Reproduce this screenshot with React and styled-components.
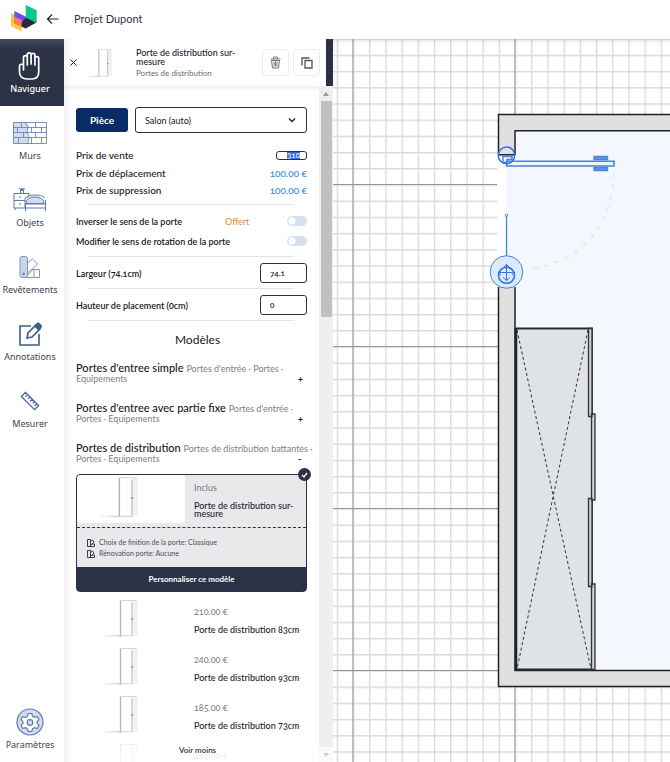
import { useEffect, useRef, useState } from "react";
import styled, { createGlobalStyle } from "styled-components";

const GlobalStyle = createGlobalStyle`
  * {
    box-sizing: border-box;
  }
  body {
    margin: 0;
    background-color: #fff;
    color: #16181d;
    font-family: Lato, "Liberation Sans", sans-serif;
    font-variant-numeric: oldstyle-nums;
    font-size: 11px;
  }
  button, input, select {
    font: inherit;
    font-variant-numeric: inherit;
    color: inherit;
    margin: 0;
  }
  button {
    cursor: pointer;
  }
`;
const Page = styled.div`
  display: flex;
  flex-direction: column;
  height: 100vh;
  overflow: hidden;
`;
const TopBar = styled.header`
  display: flex;
  align-items: center;
  flex: none;
  height: 39px;
  padding: 0 10px 2px;
`;
const BackButton = styled.button`
  display: flex;
  padding: 0;
  margin: 0 14px 0 8px;
  border: 0;
  background: none;
`;
const ProjectName = styled.h1`
  margin: 0;
  font-size: 11px;
  font-weight: 400;
  color: #2c3345;
`;
const Workspace = styled.div`
  display: flex;
  flex: 1;
  min-height: 0;
`;
const SideNav = styled.nav`
  display: flex;
  flex-direction: column;
  flex: none;
  width: 64px;
  z-index: 1;
`;
const NavButton = styled.button`
  display: flex;
  flex-direction: column;
  align-items: center;
  height: 67px;
  padding: 10px 4px 0 0;
  border: 0;
  font-family: "Noto Sans", sans-serif;
  font-size: 9px;
  line-height: 14px;
  color: ${(props) => (props.$active ? "#fff" : "#3d4353")};
  font-weight: ${(props) => (props.$active ? 500 : 400)};
  background: ${(props) =>
    props.$active ? "linear-gradient(#454e64, #2b3245 10px)" : "none"};
  margin-top: ${(props) => (props.$last ? "auto" : "0")};
`;
const NavIcon = styled.span`
  display: flex;
  align-items: center;
  justify-content: center;
  height: 33px;
`;
const Panel = styled.aside`
  display: flex;
  flex-direction: column;
  flex: none;
  width: 269px;
  box-shadow: inset 8px 0 8px -6px #ececf0;
`;
const PanelHeader = styled.div`
  display: flex;
  align-items: center;
  flex: none;
  height: 47px;
  padding: 0 6px;
  border-right: 7px solid #2b3245;
  box-shadow: 0 2px 4px rgba(0, 0, 0, 0.08);
`;
const CloseButton = styled.button`
  display: flex;
  padding: 0;
  border: 0;
  background: none;
`;
const HeaderThumb = styled.div`
  flex: none;
  width: 59px;
  padding: 3px 0 0 7px;
`;
const HeaderText = styled.div`
  flex: 1;
`;
const ItemTitle = styled.h2`
  margin: 0;
  font-size: 9px;
  line-height: 9px;
  font-weight: 500;
  color: #20242f;
`;
const ItemSub = styled.p`
  margin: 2px 0 0;
  font-size: 8px;
  line-height: 10px;
  color: #6c6c6c;
`;
const SquareButton = styled.button`
  display: flex;
  align-items: center;
  justify-content: center;
  width: 27px;
  height: 27px;
  margin-left: 4px;
  padding: 0;
  border: 1px solid #ececec;
  border-radius: 4px;
  background: #fff;
`;
const PanelBody = styled.div`
  display: flex;
  flex: 1;
  min-height: 0;
  position: relative;
`;
const Content = styled.div`
  flex: 1;
  min-width: 0;
  padding: 21px 12px 0;
  overflow: hidden;
`;
const Track = styled.div`
  display: flex;
  flex-direction: column;
  align-items: center;
  width: 14px;
  background: #efefef;
`;
const TrackEnd = styled.div`
  display: flex;
  align-items: center;
  justify-content: center;
  height: 15px;
  width: 14px;
  background: ${(props) => (props.$off ? "#fafafa" : "#efefef")};
  margin-top: ${(props) => (props.$off ? "auto" : "0")};
`;
const Thumb = styled.div`
  width: 11px;
  height: 32%;
  background: #c1c1c1;
`;
const RoomRow = styled.div`
  display: flex;
  align-items: center;
  gap: 7px;
  margin-bottom: 13px;
`;
const RoomButton = styled.button`
  width: 52px;
  height: 24px;
  padding: 0;
  border: 0;
  border-radius: 3px;
  background: #092c66;
  color: #fff;
  font-size: 10px;
  font-weight: 700;
`;
const SelectWrap = styled.div`
  display: flex;
  align-items: center;
  flex: 1;
  height: 26px;
  padding-right: 10px;
  border: 1px solid #2b3245;
  border-radius: 3px;
`;
const RoomSelect = styled.select`
  flex: 1;
  height: 24px;
  padding: 0 9px;
  border: 0;
  background: none;
  appearance: none;
  font-size: 9px;
`;
const Row = styled.div`
  display: flex;
  align-items: center;
  height: ${(props) => props.$height}px;
  font-size: ${(props) => (props.$small ? "9px" : "10px")};
  font-weight: ${(props) => (props.$small ? 600 : 500)};
`;
const RowLabel = styled.label`
  flex: 1;
`;
const Price = styled.span`
  color: #2a7fd8;
  font-weight: 400;
`;
const Offer = styled.span`
  width: 62px;
  color: #d8894a;
  font-size: 9px;
  font-weight: 400;
`;
const PriceInput = styled.input`
  width: 31px;
  height: 9px;
  padding: 0 6px;
  border: 1px solid #2b3245;
  border-radius: 3px;
  outline: 0;
  text-align: right;
  font-size: 8px;
  line-height: 7px;
  &::selection {
    background: #2f6bd8;
    color: #fff;
  }
`;
const SizeInput = styled.input`
  width: 47px;
  height: 20px;
  padding: 0 9px;
  border: 1px solid #2b3245;
  border-radius: 3px;
  font-size: 8px;
`;
const Switch = styled.input`
  appearance: none;
  width: 20px;
  height: 10px;
  margin: 0;
  border-radius: 5px;
  background: radial-gradient(circle at 5px 5px, #fff 3px, #d7dfef 4px);
  &:checked {
    background: radial-gradient(circle at 15px 5px, #fff 3px, #092c66 4px);
  }
`;
const Divider = styled.hr`
  height: 1px;
  margin: 5px 13px 6px;
  border: 0;
  background: #e4e4e6;
`;
const SectionTitle = styled.h3`
  margin: 11px -12px 13px 0;
  text-align: center;
  font-size: 12px;
  line-height: 16px;
  font-weight: 400;
`;
const Group = styled.button`
  display: flex;
  align-items: flex-end;
  width: 100%;
  height: 22px;
  margin-bottom: 18px;
  padding: 0;
  border: 0;
  background: none;
  text-align: left;
  line-height: 9px;
`;
const GroupText = styled.span`
  flex: 1;
  min-width: 0;
  white-space: nowrap;
`;
const GroupName = styled.span`
  font-size: 11px;
  font-weight: 500;
`;
const GroupPath = styled.span`
  font-size: 9px;
  color: #7d8087;
`;
const Sign = styled.span`
  width: 9px;
  margin-left: -9px;
  font-size: 9px;
  font-weight: 700;
`;
const SelectedCard = styled.article`
  position: relative;
  margin-top: -7px;
  border: 1px solid #2b3245;
  border-radius: 4px;
  background: #e9e9eb;
`;
const CheckBadge = styled.span`
  position: absolute;
  top: -7px;
  right: -5px;
  display: flex;
  align-items: center;
  justify-content: center;
  width: 13px;
  height: 13px;
  border-radius: 50%;
  background: #2b3245;
`;
const CardTop = styled.div`
  display: flex;
  height: 53px;
  padding-bottom: 4px;
  border-bottom: 1px dashed #2b3245;
`;
const CardThumb = styled.div`
  display: flex;
  justify-content: center;
  width: 108px;
  padding-right: 20px;
  border-radius: 4px;
  background: #fff;
`;
const CardText = styled.div`
  flex: 1;
  padding: 7px 0 0 9px;
`;
const ModelPrice = styled.p`
  margin: 0;
  font-size: ${(props) => (props.$included ? "9px" : "10px")};
  line-height: 12px;
  color: #777a82;
`;
const ModelName = styled.p`
  margin: 8px 0 0;
  font-size: 9px;
  line-height: 8px;
  font-weight: 500;
  white-space: nowrap;
  color: #20242f;
`;
const Options = styled.ul`
  margin: 0;
  padding: 9px 10px 8px;
  list-style: none;
  font-size: 7px;
  line-height: 11px;
  color: #4b4f5b;
`;
const Option = styled.li`
  display: flex;
  align-items: center;
  gap: 4px;
`;
const CustomizeButton = styled.button`
  display: block;
  width: 100%;
  height: 24px;
  padding: 0;
  border: 0;
  background: #2b3245;
  color: #fff;
  font-size: 8px;
  font-weight: 700;
`;
const Model = styled.article`
  display: flex;
  height: 48px;
`;
const ModelThumb = styled.div`
  display: flex;
  justify-content: center;
  width: 109px;
  padding: 7px 18px 0 0;
`;
const ModelText = styled.div`
  padding: 14px 0 0 9px;
`;
const MoreBar = styled.div`
  position: absolute;
  left: 12px;
  right: 14px;
  bottom: 0;
  display: flex;
  justify-content: center;
  height: 24px;
  padding-top: 6px;
  background: linear-gradient(rgba(255, 255, 255, 0.4), rgba(255, 255, 255, 0.85) 12px);
`;
const MoreButton = styled.button`
  height: 12px;
  padding: 0;
  border: 0;
  background: none;
  font-size: 8px;
  font-weight: 500;
`;
const PlanArea = styled.main`
  flex: 1;
  min-width: 0;
`;
const Plan = styled.svg`
  display: block;
  width: 100%;
  height: 100%;
`;

function Logo() {
  return (
    <svg width="27" height="27" viewBox="0 0 27 27">
      <path d="M1 8l10.700 5.300v13.200L1 21z" fill="#ffc931" />
      <path d="M15.700 0l11 5.300v13l-11-5.300z" fill="#0bc68a" />
      <path d="M4.300 6l11.400 5.500v12L4.300 18z" fill="#6c4df6" />
      <path d="M4.300 11.500l7.400 3.600v6.600L4.300 18z" fill="#ff7a59" />
      <path d="M15.700 12.500l10.300 5.200-10.300 5.800-4-2v-3.500z" fill="#262b3d" />
    </svg>
  );
}

function Door({ width, height }) {
  return (
    <svg width={width} height={height} viewBox="0 0 42 40">
      <defs>
        <linearGradient id="shade">
          <stop offset="0" stopColor="#fff" />
          <stop offset="1" stopColor="#ccc" />
        </linearGradient>
      </defs>
      <path d="M0 36h21v1.500H0z" fill="url(#shade)" />
      <path d="M31.500 2h5v34l-5 1z" fill="#f1f1f2" />
      <path d="M19.500 37V2h11.500v35z" fill="#fff" />
      <path d="M19.500 37V1.500" stroke="#b4b4b8" strokeWidth="1.300" />
      <path d="M31 3v34" stroke="#c4c4c8" strokeWidth="1.300" />
      <path d="M19 1.500h17M19 36.800h12" stroke="#d4d4d6" fill="none" />
      <path d="M30 20h2.500" stroke="#999" strokeWidth="1.300" />
    </svg>
  );
}

function SwatchIcon() {
  return (
    <svg width="8" height="8" viewBox="0 0 8 8" fill="none" stroke="#262b3d" strokeWidth=".9">
      <path d="M.5.500h3v7h-3zM3.500 2.500l2-1.500 1.500 2-3.500 3.500M5 5h2.500v2.500h-5" />
    </svg>
  );
}

const icons = {
  hand: (
    <svg width="24" height="30" viewBox="0 0 24 30" fill="none" stroke="#fff" strokeWidth="1.700" strokeLinecap="round" strokeLinejoin="round">
      <path d="M5.500 17V6.500a1.900 1.900 0 0 1 3.800 0V14M9.300 13V3.800a1.900 1.900 0 0 1 3.800 0V13M13.100 13V4.300a1.900 1.900 0 0 1 3.800 0V14M16.900 14V7.500a1.900 1.900 0 0 1 3.800 0V21c0 4.500-2.500 7-7 7H9c-4.500 0-7.500-2.500-7.500-7v-5.500a2 2 0 0 1 4-.5v4" />
    </svg>
  ),
  walls: (
    <svg width="34" height="22" viewBox="0 0 34 22" fill="none" stroke="#5c7bab">
      <path d="M.5.500h14l1 5-2 5 2 5-1 6H.5z" fill="#d2dced" stroke="none" />
      <path d="M.5.500h33v21H.5zM.5 5.500h33M.5 10.500h33M.5 15.500h33M8.500.500v5M4.500 5.500v5M10.500 10.500v5M5.500 15.500v6M22.500.500v5M18.500 5.500v5M28.500 5.500v5M22.500 10.500v5M18.500 15.500v6M28.500 15.500v6M12 .5l3 4-1 6 2 4-1 7" strokeWidth=".8" />
    </svg>
  ),
  objects: (
    <svg width="34" height="23" viewBox="0 0 34 23" fill="none" stroke="#5c7bab">
      <path d="M1 5.500h15v2l-4 3V20H1zM1 12.500h11M7.500 5V1.500h3V5M2 20v2M6 9h2M6 16h2" />
      <path d="M13 15.500c0-4 3-6.500 9-6.500s9 2.500 9 6.500z" fill="#d2dced" />
      <path d="M14 10V9c1-1 4-2 8-2s8 1 9 2v1M12.500 16h20v4h-20zM12.500 20v3M32.500 12v11" />
      <path d="M6 .8h6M7 2.500h4" />
    </svg>
  ),
  covers: (
    <svg width="22" height="22" viewBox="0 0 22 22" fill="none" stroke="#7e96bd">
      <rect x="1" y=".5" width="7.500" height="21" rx="2" fill="#c9d5e8" />
      <path d="M8.500 7l5-4 5 5-10 9M13.500 13.500h7v8h-14M8.500 19l6-6M15 14v7" />
      <circle cx="4.700" cy="18" r="1" fill="#5c7bab" />
    </svg>
  ),
  notes: (
    <svg width="23" height="24" viewBox="0 0 23 24" fill="none" stroke="#3c5b92" strokeWidth="1.600">
      <path d="M12 4H1v19h19V12M8 16l1-5 8-8 4 4-8 8z" />
      <path d="M16 4l2.500-2.500c1-1 4.500 2.500 3.500 3.500L19.500 7.500z" fill="#3c5b92" />
    </svg>
  ),
  ruler: (
    <svg width="20" height="20" viewBox="0 0 22 22" fill="none" stroke="#47669c" strokeWidth="1.400">
      <path d="M1.500 6L6 1.500 20.500 16 16 20.500zM8.500 4L6 6.500M11 6.500L9 8.500M13.500 9L11 11.500M16 11.500l-2 2M18.500 14L16 16.500" />
    </svg>
  ),
  settings: (
    <svg width="28" height="28" viewBox="0 0 28 28" fill="#d2dced" stroke="#5c7bab" strokeWidth="1.200">
      <circle cx="14" cy="14" r="13" />
      <path fill="#fff" strokeLinejoin="round" d="M12.200 5.500h3.600l.7 2.700 2 1.100 2.700-.8 1.800 3.200-2 2v1.600l2 2-1.800 3.200-2.700-.8-2 1.100-.7 2.700h-3.600l-.7-2.700-2-1.100-2.700.8L5 17.300l2-2v-1.600l-2-2 1.800-3.200 2.700.8 2-1.100z" />
      <circle cx="14" cy="14.500" r="2.800" />
    </svg>
  ),
};

const navItems = [
  { label: "Naviguer", icon: "hand" },
  { label: "Murs", icon: "walls" },
  { label: "Objets", icon: "objects" },
  { label: "Revêtements", icon: "covers" },
  { label: "Annotations", icon: "notes" },
  { label: "Mesurer", icon: "ruler" },
  { label: "Paramètres", icon: "settings" },
];
const groups = [
  { name: "Portes d'entree simple", path: ["Portes d'entrée · Portes ·", "Equipements"] },
  { name: "Portes d'entree avec partie fixe", path: ["Portes d'entrée ·", "Portes · Equipements"] },
  { name: "Portes de distribution", path: ["Portes de distribution battantes ·", "Portes · Equipements"], open: true },
];
const models = [
  { price: "210.00 €", name: "Porte de distribution 83cm" },
  { price: "240.00 €", name: "Porte de distribution 93cm" },
  { price: "185.00 €", name: "Porte de distribution 73cm" },
  { price: "160.00 €" },
];

function FloorPlan() {
  return (
    <Plan>
      <defs>
        <pattern id="minor" x="3.700" y="-.5" width="16.200" height="16.200" patternUnits="userSpaceOnUse">
          <path d="M0 .7h16.200M.7 0v16.200" stroke="#d9d9d9" strokeWidth="1.300" />
        </pattern>
        <pattern id="major" x="19.400" y="145" width="162" height="162" patternUnits="userSpaceOnUse">
          <path d="M0 .5h162M.5 0v162" stroke="#949494" strokeWidth="1" />
        </pattern>
        <linearGradient id="topShade" x2="0" y2="1">
          <stop offset="0" stopColor="#000" stopOpacity=".08" />
          <stop offset="1" stopColor="#000" stopOpacity="0" />
        </linearGradient>
      </defs>
      <rect width="100%" height="100%" fill="url(#minor)" />
      <rect width="100%" height="100%" fill="url(#major)" />
      <rect width="100%" height="5" fill="url(#topShade)" />
      <g transform="translate(-333 -39)">
        <path d="M498.500 114.500H2000v572H498.500z" fill="#e0e0e0" stroke="#222" strokeWidth="1.500" />
        <path d="M515 130.800H2000v539.700H515z" fill="#f4f8fe" stroke="#222" strokeWidth="1.500" />
        <path d="M497 155h10v132h-10z" fill="#fff" />
        <path d="M506.500 155H517v132h-10.500z" fill="#f4f8fe" />
        <path d="M498 154.800h17" stroke="#222" strokeWidth="1.500" />

        <path d="M516 328.500h76v341h-76z" fill="#dfe3e6" stroke="#2a2a2a" strokeWidth="1.800" />
        <path d="M516 328v342" stroke="#222" strokeWidth="2.500" />
        <path d="M517 330l74 339M588 330l-71 339" stroke="#333" strokeDasharray="3 2.500" fill="none" />
        <g fill="#d0cecf" stroke="#333" strokeWidth="1.300">
          <path d="M588.500 328.500h3.500v88h-3.500zM591.500 414h3.500v86h-3.500zM588.500 498.500h3.500v88h-3.500zM591.500 584h3.500v85.500h-3.500z" />
        </g>

        <path d="M614 173q-4 82-85 97" fill="none" stroke="#dce8f8" strokeWidth="1.500" strokeDasharray="5 6" />
        <g fill="none" stroke="#4387d6">
          <path d="M506.500 161.200h107.500v4.800H506.500z" fill="#eef5fd" strokeWidth="1.600" />
          <path d="M594 156.500h13.500v3H594zM594 167.500h13.500v3H594z" fill="#5d9be0" strokeWidth="1.300" />
          <path d="M502 156.500h10v3h-5v3h-4v-5" strokeWidth="1.500" />
          <circle cx="506.500" cy="155.300" r="8.300" stroke="#2f74e0" strokeWidth="1.500" />
          <path d="M506.500 216v40" strokeWidth="1.300" />
          <circle cx="506.500" cy="215.300" r="1.200" />
          <circle cx="506.500" cy="272" r="16.300" fill="#dceafd" />
          <circle cx="506.500" cy="275.300" r="8" stroke="#2f74e0" strokeWidth="1.600" />
          <path d="M506.500 264v16.500M503.500 267.500l3-3 3 3M503 277.500l3.500 3 3.500-3M499 272.500h15M501 270l-2.500 3 2.500 2M512 270l2.500 3-2.500 2" stroke="#2f74e0" />
        </g>
      </g>
    </Plan>
  );
}

export default function App() {
  const [active, setActive] = useState("Naviguer");
  const priceRef = useRef(null);

  useEffect(() => {
    priceRef.current.focus();
    priceRef.current.select();
  }, []);

  return (
    <Page>
      <GlobalStyle />
      <TopBar>
        <Logo />
        <BackButton aria-label="Retour">
          <svg width="15" height="12" viewBox="0 0 15 12" fill="none" stroke="#222" strokeWidth="1.200">
            <path d="M13.500 6H3M7 1.500L2.500 6 7 10.500" />
          </svg>
        </BackButton>
        <ProjectName>Projet Dupont</ProjectName>
      </TopBar>
      <Workspace>
        <SideNav>
          {navItems.map((item) => (
            <NavButton
              key={item.label}
              $active={item.label === active}
              $last={item.icon === "settings"}
              onClick={() => setActive(item.label)}
            >
              <NavIcon>{icons[item.icon]}</NavIcon>
              {item.label}
            </NavButton>
          ))}
        </SideNav>
        <Panel>
          <PanelHeader>
            <CloseButton aria-label="Fermer">
              <svg width="7" height="7" viewBox="0 0 7 7" stroke="#222">
                <path d="M.5.500l6 6M6.500.500l-6 6" />
              </svg>
            </CloseButton>
            <HeaderThumb>
              <Door width={32} height={31} />
            </HeaderThumb>
            <HeaderText>
              <ItemTitle>Porte de distribution sur-<br />mesure</ItemTitle>
              <ItemSub>Portes de distribution</ItemSub>
            </HeaderText>
            <SquareButton aria-label="Supprimer">
              <svg width="11" height="13" viewBox="0 0 11 13" fill="none" stroke="#777">
                <path d="M.5 3h10M3.500 3V1h4v2M1.500 4.500l1 7.500h6l1-7.500zM4 5.500v5M5.500 5.500v5M7 5.500v5" />
              </svg>
            </SquareButton>
            <SquareButton aria-label="Dupliquer">
              <svg width="12" height="12" viewBox="0 0 12 12" fill="none" stroke="#555" strokeWidth="1.300">
                <path d="M1 8.500V1h7.500M4 3.500h7v7.500H4z" />
              </svg>
            </SquareButton>
          </PanelHeader>
          <PanelBody>
            <Content>
              <RoomRow>
                <RoomButton>Pièce</RoomButton>
                <SelectWrap>
                  <RoomSelect aria-label="Pièce">
                    <option>Salon (auto)</option>
                  </RoomSelect>
                  <svg width="8" height="6" viewBox="0 0 8 6" fill="none" stroke="#222" strokeWidth="1.300">
                    <path d="M1 1.500l3 3 3-3" />
                  </svg>
                </SelectWrap>
              </RoomRow>
              <Row $height={18}>
                <RowLabel htmlFor="price">Prix de vente</RowLabel>
                <PriceInput id="price" ref={priceRef} defaultValue="310" />
              </Row>
              <Row $height={17}>
                <RowLabel as="span">Prix de déplacement</RowLabel>
                <Price>100.00 €</Price>
              </Row>
              <Row $height={18}>
                <RowLabel as="span">Prix de suppression</RowLabel>
                <Price>100.00 €</Price>
              </Row>
              <Divider />
              <Row $height={20} $small>
                <RowLabel htmlFor="flip">Inverser le sens de la porte</RowLabel>
                <Offer>Offert</Offer>
                <Switch id="flip" type="checkbox" />
              </Row>
              <Row $height={20} $small>
                <RowLabel htmlFor="turn">Modifier le sens de rotation de la porte</RowLabel>
                <Switch id="turn" type="checkbox" />
              </Row>
              <Divider />
              <Row $height={20} $small>
                <RowLabel htmlFor="width">Largeur (74.1cm)</RowLabel>
                <SizeInput id="width" defaultValue="74.1" />
              </Row>
              <Divider />
              <Row $height={20} $small>
                <RowLabel htmlFor="height">Hauteur de placement (0cm)</RowLabel>
                <SizeInput id="height" defaultValue="0" />
              </Row>
              <Divider />
              <SectionTitle>Modèles</SectionTitle>
              {groups.map((group) => (
                <Group key={group.name} aria-expanded={!!group.open}>
                  <GroupText>
                    <GroupName>{group.name}</GroupName>{" "}
                    <GroupPath>
                      {group.path[0]}
                      <br />
                      {group.path[1]}
                    </GroupPath>
                  </GroupText>
                  <Sign>{group.open ? "-" : "+"}</Sign>
                </Group>
              ))}
              <SelectedCard>
                <CheckBadge>
                  <svg width="7" height="6" viewBox="0 0 7 6" fill="none" stroke="#fff" strokeWidth="1.300">
                    <path d="M1 3l2 2 3-4" />
                  </svg>
                </CheckBadge>
                <CardTop>
                  <CardThumb>
                    <Door width={46} height={46} />
                  </CardThumb>
                  <CardText>
                    <ModelPrice $included>Inclus</ModelPrice>
                    <ModelName>Porte de distribution sur-<br />mesure</ModelName>
                  </CardText>
                </CardTop>
                <Options>
                  <Option><SwatchIcon />Choix de finition de la porte: Classique</Option>
                  <Option><SwatchIcon />Rénovation porte: Aucune</Option>
                </Options>
                <CustomizeButton>Personnaliser ce modèle</CustomizeButton>
              </SelectedCard>
              {models.map((model) => (
                <Model key={model.price}>
                  <ModelThumb>
                    <Door width={42} height={40} />
                  </ModelThumb>
                  <ModelText>
                    <ModelPrice $included>{model.price}</ModelPrice>
                    {model.name && <ModelName>{model.name}</ModelName>}
                  </ModelText>
                </Model>
              ))}
            </Content>
            <Track aria-hidden="true">
              <TrackEnd>
                <svg width="6" height="4"><path d="M0 4l3-4 3 4z" fill="#999" /></svg>
              </TrackEnd>
              <Thumb />
              <TrackEnd $off>
                <svg width="6" height="4"><path d="M0 0l3 4 3-4z" fill="#ccc" /></svg>
              </TrackEnd>
            </Track>
            <MoreBar>
              <MoreButton>Voir moins</MoreButton>
            </MoreBar>
          </PanelBody>
        </Panel>
        <PlanArea>
          <FloorPlan />
        </PlanArea>
      </Workspace>
    </Page>
  );
}
